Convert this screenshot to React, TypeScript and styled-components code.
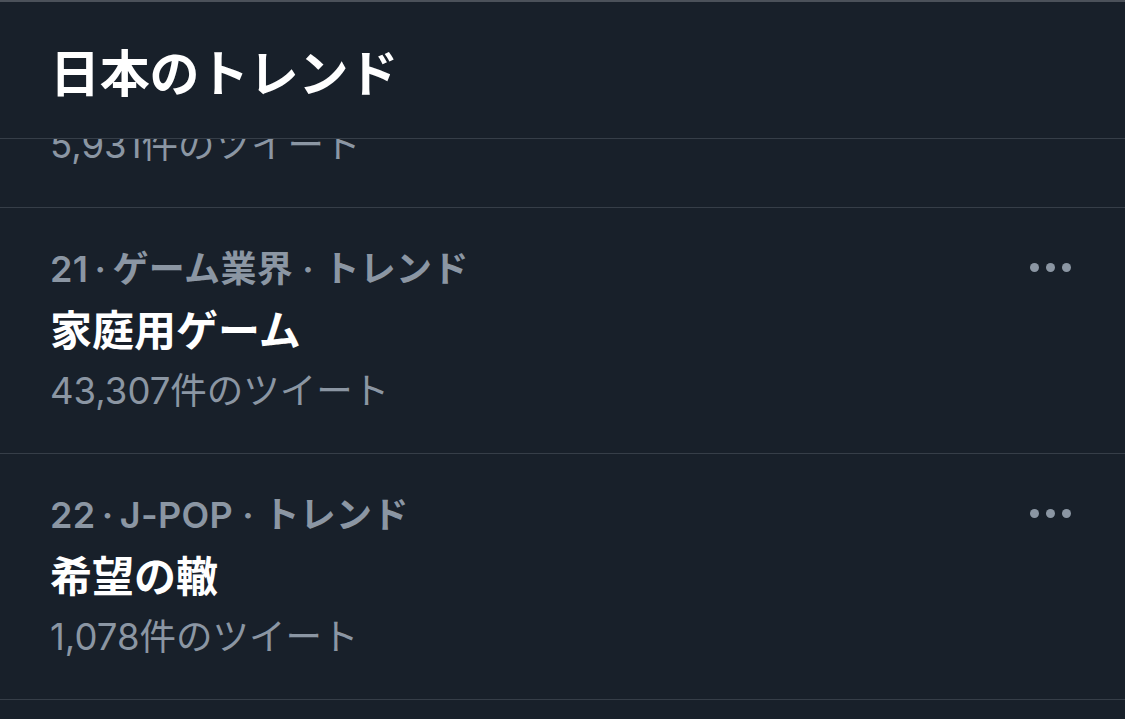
import styled, { createGlobalStyle } from 'styled-components';

const GlobalStyle = createGlobalStyle`
  html, body {
    margin: 0;
    padding: 0;
    background: #18202a;
  }
  body {
    font-family: Inter, "Noto Sans CJK JP", sans-serif;
    -webkit-font-smoothing: antialiased;
  }
`;

const trends = [
  { rank: 20, meta: '', title: '', count: '5,931件のツイート' },
  { rank: 21, meta: 'ゲーム業界 · トレンド', title: '家庭用ゲーム', count: '43,307件のツイート' },
  { rank: 22, meta: 'J-POP · トレンド', title: '希望の轍', count: '1,078件のツイート' },
];

const Screen = styled.div`
  width: 1125px;
  height: 719px;
  overflow: hidden;
  background: #18202a;
  border-top: 2px solid #4b515a;
  box-sizing: border-box;
`;

const Header = styled.header`
  position: sticky;
  top: 0;
  z-index: 2;
  height: 136px;
  display: flex;
  align-items: center;
  padding: 0 50px;
  background: #18202a;
  border-bottom: 1px solid #363e48;
`;

const Title = styled.h1`
  margin: 0;
  color: #ffffff;
  font-size: 50px;
  font-weight: 700;
  letter-spacing: -0.3px;
`;

// the list is scrolled a little: row 20 sits mostly under the header
const List = styled.ul`
  list-style: none;
  margin: -177px 0 0;
  padding: 0;
`;

const Row = styled.li`
  display: flex;
  justify-content: space-between;
  align-items: flex-start;
  height: 246px;
  padding: 31px 54px 0 50px;
  border-bottom: 1px solid #363e48;
  box-sizing: border-box;
`;

const Body = styled.div`
  display: flex;
  flex-direction: column;
`;

const Meta = styled.div`
  color: #8b96a3;
  font-size: 36px;
  font-weight: 600;
  line-height: 61px;
  white-space: nowrap;
  letter-spacing: 0.3px;
`;

const TrendName = styled.div`
  color: #ffffff;
  font-size: 42px;
  font-weight: 700;
  line-height: 61px;
`;

const Count = styled.div<{ $hiddenTop?: boolean }>`
  color: #8b96a3;
  font-size: 36.5px;
  font-weight: 400;
  line-height: 61px;
  margin-top: ${(p) => (p.$hiddenTop ? '122px' : '0')};
`;

const More = styled.button`
  display: flex;
  gap: 7px;
  align-items: center;
  height: 56px;
  padding: 0;
  border: 0;
  background: none;
  cursor: pointer;
`;

const Dot = styled.span`
  width: 9px;
  height: 9px;
  border-radius: 50%;
  background: #8b96a3;
`;

export default function App() {
  return (
    <>
      <GlobalStyle />
      <Screen>
        <Header>
          <Title>日本のトレンド</Title>
        </Header>
        <List>
          {trends.map((t) => (
            <Row key={t.rank}>
              <Body>
                {t.meta ? (
                  <>
                    <Meta>
                      {t.rank}{'\u2009·\u2009'}{t.meta}
                    </Meta>
                    <TrendName>{t.title}</TrendName>
                    <Count>{t.count}</Count>
                  </>
                ) : (
                  <Count $hiddenTop>{t.count}</Count>
                )}
              </Body>
              {t.meta && (
                <More aria-label="その他">
                  <Dot />
                  <Dot />
                  <Dot />
                </More>
              )}
            </Row>
          ))}
        </List>
      </Screen>
    </>
  );
}
